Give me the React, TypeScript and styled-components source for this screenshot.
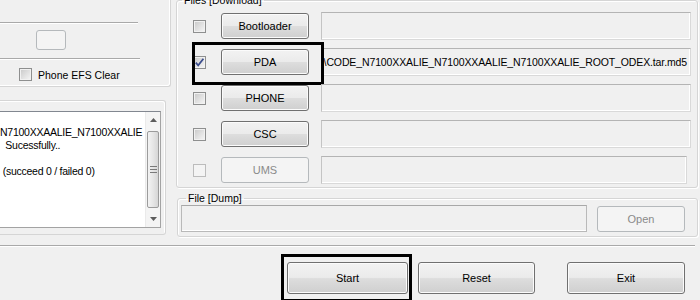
import React from "react";
import styled, { createGlobalStyle } from "styled-components";

const GlobalStyle = createGlobalStyle`
  * { box-sizing: border-box; }
  html, body { margin: 0; padding: 0; background: #f0f0f0; }
  body {
    font-family: "Liberation Sans", Arial, sans-serif;
    font-size: 10.5px;
    color: #000;
  }
`;

const Window = styled.div`
  width: 700px;
  height: 300px;
  overflow: hidden;
  background: #f0f0f0;
`;

const Workspace = styled.div`
  display: grid;
  grid-template-columns: 172px 522px;
  column-gap: 4px;
  height: 245px;
`;

const LeftColumn = styled.div`
  display: flex;
  flex-direction: column;
`;

const RightColumn = styled.div`
  display: flex;
  flex-direction: column;
`;

/* ---------- shared controls ---------- */

const WinButton = styled.button<{ $w: number; $h: number }>`
  font: inherit;
  font-size: 11px;
  color: #000;
  width: ${(p) => p.$w}px;
  height: ${(p) => p.$h}px;
  padding: 0;
  border: 1px solid #707070;
  border-radius: 3px;
  background: linear-gradient(#f2f2f2 0%, #ebebeb 48%, #dddddd 52%, #cfcfcf 100%);
  box-shadow: inset 0 0 0 1px #fbfbfb;
  flex: none;

  &:disabled {
    color: #8a8a8a;
    border-color: #b5b9bc;
    background: #f4f4f4;
    box-shadow: none;
  }
`;

const CheckBox = styled.span<{ $disabled?: boolean }>`
  display: inline-flex;
  align-items: center;
  justify-content: center;
  width: 13px;
  height: 13px;
  flex: none;
  border: 1px solid ${(p) => (p.$disabled ? "#bcbcbc" : "#8e8f8f")};
  background: ${(p) =>
    p.$disabled ? "#f4f4f4" : "linear-gradient(135deg, #c8c8c8 0%, #e2e2e2 55%, #f6f6f6 100%)"};
  box-shadow: inset 0 0 0 1px ${(p) => (p.$disabled ? "#f4f4f4" : "#f1f1f1")};

  svg {
    display: block;
  }
`;

function Check({ checked, disabled }: { checked?: boolean; disabled?: boolean }) {
  return (
    <CheckBox $disabled={disabled}>
      {checked && (
        <svg width="11" height="11" viewBox="0 0 11 11">
          <path d="M1.8 5.6 L4.2 8.4 L9.4 1.8" fill="none" stroke="#3a4c8c" strokeWidth="1.7" />
        </svg>
      )}
    </CheckBox>
  );
}

const Rule = styled.div<{ $w: number }>`
  width: ${(p) => p.$w}px;
  height: 2px;
  border-top: 1px solid #a9a9a9;
  border-bottom: 1px solid #fff;
`;

const Mark = styled.div`
  position: absolute;
  border: 3px solid #000;
  pointer-events: none;
`;

/* ---------- left: options ---------- */

const OptionsGroup = styled.div`
  width: 171px;
  height: 87px;
  padding-top: 22px;
  border-right: 1px solid #d5d5d5;
  border-bottom: 1px solid #d5d5d5;
  border-bottom-right-radius: 3px;
  box-shadow: inset -1px -1px 0 #fff;
`;

const BlankButtonRow = styled.div`
  padding: 6px 0 7px 36px;
`;

const OptionRow = styled.label`
  display: flex;
  align-items: center;
  gap: 6px;
  margin-top: 8px;
  padding-left: 19px;
  height: 13px;
`;

function Options() {
  return (
    <OptionsGroup>
      <Rule $w={138} />
      <BlankButtonRow>
        <WinButton $w={30} $h={20} disabled />
      </BlankButtonRow>
      <Rule $w={140} />
      <OptionRow>
        <Check />
        Phone EFS Clear
      </OptionRow>
    </OptionsGroup>
  );
}

/* ---------- left: message log ---------- */

const MessageGroup = styled.div`
  margin-top: 13px;
  width: 166px;
  height: 135px;
  padding-top: 10px;
  border: 1px solid #d5d5d5;
  border-left: none;
  border-radius: 0 3px 3px 0;
  box-shadow: inset -1px 1px 0 #fff;
`;

const LogBox = styled.div`
  display: flex;
  width: 161px;
  height: 117px;
  background: #fff;
  border: 1px solid #a3a3a3;
  border-left: none;
  border-top-color: #828790;
`;

const LogText = styled.div`
  flex: 1;
  overflow: hidden;
  padding-top: 14px;
  line-height: 13px;
  letter-spacing: -0.25px;
  white-space: pre;
`;

const ScrollBar = styled.div`
  width: 15px;
  display: flex;
  flex-direction: column;
  background: #f4f4f4;
  border-left: 1px solid #eaeaea;
`;

const ArrowCell = styled.div`
  height: 17px;
  display: flex;
  align-items: center;
  justify-content: center;
`;

const Track = styled.div`
  flex: 1;
  padding: 2px 0 3px;
`;

const Thumb = styled.div`
  height: 77px;
  margin: 0 1px;
  border: 1px solid #9b9b9b;
  border-radius: 2px;
  background: linear-gradient(to right, #f3f3f3, #e6e6e6 50%, #d6d6d6);
  display: flex;
  align-items: center;
  justify-content: center;
`;

function Log() {
  return (
    <MessageGroup>
      <LogBox>
        <LogText>
          {"N7100XXAALIE_N7100XXALIE\n  Sucessfully..\n\n (succeed 0 / failed 0)"}
        </LogText>
        <ScrollBar>
          <ArrowCell>
            <svg width="7" height="4" viewBox="0 0 7 4">
              <path d="M0 4 L3.5 0 L7 4 Z" fill="#5c5c5c" />
            </svg>
          </ArrowCell>
          <Track>
            <Thumb>
              <svg width="7" height="7" viewBox="0 0 7 7">
                <path d="M0 0.5 H7 M0 3.5 H7 M0 6.5 H7" stroke="#7a7a7a" strokeWidth="1" />
              </svg>
            </Thumb>
          </Track>
          <ArrowCell>
            <svg width="7" height="4" viewBox="0 0 7 4">
              <path d="M0 0 L3.5 4 L7 0 Z" fill="#5c5c5c" />
            </svg>
          </ArrowCell>
        </ScrollBar>
      </LogBox>
    </MessageGroup>
  );
}

/* ---------- right: files ---------- */

const GroupBox = styled.fieldset`
  margin: 0;
  min-width: 0;
  border: 1px solid #d5d5d5;
  border-radius: 3px;
  box-shadow: inset 1px 1px 0 #fff, 1px 1px 0 #fff;
`;

const Legend = styled.legend<{ $offset: number }>`
  padding: 0 2px;
  margin-left: ${(p) => p.$offset}px;
  line-height: 12px;
`;

const FilesGroup = styled(GroupBox)`
  margin-top: -6px;
  padding: 6px 6px 3px 16px;
`;

const FileRows = styled.div`
  display: flex;
  flex-direction: column;
  gap: 8px;
`;

const FileRow = styled.div`
  position: relative;
  display: flex;
  align-items: center;
  height: 28px;

  & > ${CheckBox} {
    margin-right: 15px;
  }
  & > ${WinButton} {
    margin-right: 12px;
  }
`;

const PathField = styled.div<{ $inset?: number }>`
  flex: 1;
  height: 28px;
  margin-right: ${(p) => p.$inset ?? 0}px;
  display: flex;
  align-items: center;
  justify-content: flex-end;
  overflow: hidden;
  white-space: nowrap;
  letter-spacing: -0.12px;
  padding: 0 3px 0 1px;
  background: #f0f0f0;
  border: 1px solid #d9d9d9;
  border-top-color: #b4b4b4;
  border-left-color: #c4c4c4;
  box-shadow: inset 0 -1px 0 #fff, inset -1px 0 0 #fff;
`;

const PdaMark = styled(Mark)`
  left: -1px;
  top: -6px;
  width: 132px;
  height: 43px;
`;

type FileSlot = {
  name: string;
  path?: string;
  checked?: boolean;
  disabled?: boolean;
  marked?: boolean;
  inset?: number;
};

const slots: FileSlot[] = [
  { name: "Bootloader" },
  {
    name: "PDA",
    checked: true,
    marked: true,
    path: ")\\CODE_N7100XXALIE_N7100XXAALIE_N7100XXALIE_ROOT_ODEX.tar.md5",
  },
  { name: "PHONE" },
  { name: "CSC" },
  { name: "UMS", disabled: true, inset: 4 },
];

function Files() {
  return (
    <FilesGroup>
      <Legend $offset={-11}>Files [Download]</Legend>
      <FileRows>
        {slots.map((s) => (
          <FileRow key={s.name}>
            <Check checked={s.checked} disabled={s.disabled} />
            <WinButton $w={88} $h={26} disabled={s.disabled}>
              {s.name}
            </WinButton>
            <PathField $inset={s.inset}>{s.path}</PathField>
            {s.marked && <PdaMark />}
          </FileRow>
        ))}
      </FileRows>
    </FilesGroup>
  );
}

/* ---------- right: dump ---------- */

const DumpGroup = styled(GroupBox)`
  margin-top: 4px;
  margin-left: 1px;
  padding: 1px 12px 4px 3px;
`;

const DumpRow = styled.div`
  display: flex;
  align-items: center;
  gap: 10px;
`;

const DumpField = styled.div`
  width: 406px;
  height: 27px;
  background: #f0f0f0;
  border: 1px solid #b9b9b9;
  border-top-color: #a8a8a8;
  box-shadow: inset 0 -1px 0 #fff;
`;

function Dump() {
  return (
    <DumpGroup>
      <Legend $offset={5}>File [Dump]</Legend>
      <DumpRow>
        <DumpField />
        <WinButton $w={88} $h={26} disabled>
          Open
        </WinButton>
      </DumpRow>
    </DumpGroup>
  );
}

/* ---------- bottom bar ---------- */

const ButtonBar = styled.div`
  display: flex;
  justify-content: flex-end;
  gap: 10px;
  padding: 15px 15px 0 0;
`;

const MarkedSlot = styled.div`
  position: relative;
`;

const StartMark = styled(Mark)`
  left: -6px;
  top: -8px;
  right: -4px;
  bottom: -8px;
`;

const ExitButton = styled(WinButton)`
  margin-left: 22px;
`;

export default function App() {
  return (
    <Window>
      <GlobalStyle />
      <Workspace>
        <LeftColumn>
          <Options />
          <Log />
        </LeftColumn>
        <RightColumn>
          <Files />
          <Dump />
        </RightColumn>
      </Workspace>
      <Rule $w={695} />
      <ButtonBar>
        <MarkedSlot>
          <WinButton $w={121} $h={32}>
            Start
          </WinButton>
          <StartMark />
        </MarkedSlot>
        <WinButton $w={117} $h={32}>
          Reset
        </WinButton>
        <ExitButton $w={118} $h={32}>
          Exit
        </ExitButton>
      </ButtonBar>
    </Window>
  );
}
